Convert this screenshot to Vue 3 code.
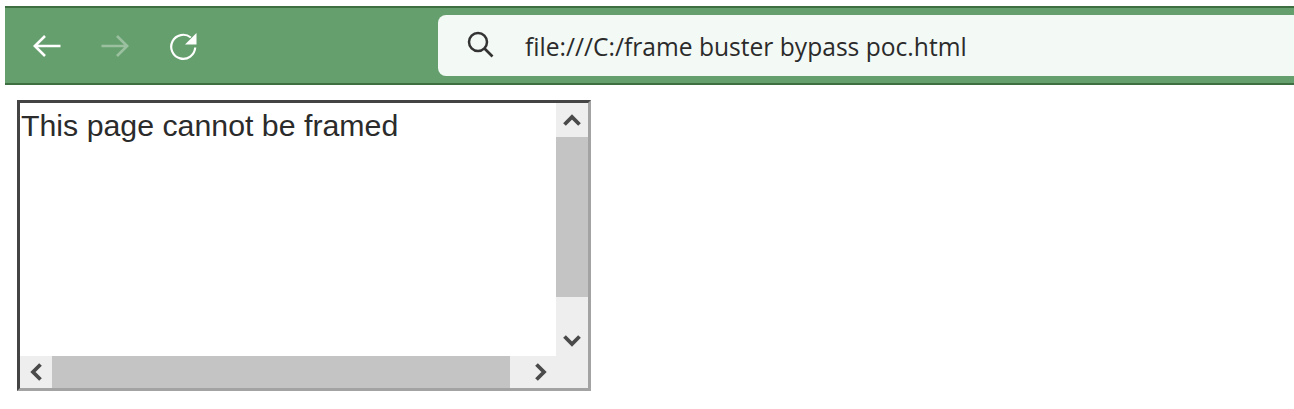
<script setup>
const url = "file:///C:/frame buster bypass poc.html";
const message = "This page cannot be framed";
</script>

<template>
  <div class="page">
    <header class="toolbar">
      <nav class="nav-buttons">
        <svg class="nav-icon" viewBox="0 0 28 26" width="28" height="26">
          <path d="M12 3 1.8 13 12 23M2 13h25.5" fill="none" stroke="#fff" stroke-width="2.6" />
        </svg>
        <svg class="nav-icon faded" viewBox="0 0 28 26" width="28" height="26">
          <path d="M16 3 26.2 13 16 23M26 13H.5" fill="none" stroke="#fff" stroke-width="2.6" />
        </svg>
        <svg class="nav-icon" viewBox="0 0 28 28" width="28" height="28">
          <path d="M21.8 5.5A12 12 0 1 0 26.2 15.5" fill="none" stroke="#fff" stroke-width="2.2" />
          <path d="M27.5 1v11.5H16z" fill="#fff" />
        </svg>
      </nav>
      <div class="address">
        <svg class="search-icon" viewBox="0 0 27 27" width="27" height="27">
          <circle cx="11" cy="11" r="9" fill="none" stroke="#333" stroke-width="2.5" />
          <path d="m17.5 17.5 8 8" stroke="#333" stroke-width="2.7" fill="none" />
        </svg>
        <span class="url">{{ url }}</span>
      </div>
    </header>

    <div class="frame">
      <div class="content">{{ message }}</div>
      <div class="vbar">
        <div class="arrow-btn up">
          <svg viewBox="0 0 18 12" width="18" height="12"><path d="M1.5 10.5 9 3l7.5 7.5" fill="none" stroke="#4a4a4a" stroke-width="3.8" /></svg>
        </div>
        <div class="vthumb"></div>
        <div class="track"></div>
        <div class="arrow-btn down">
          <svg viewBox="0 0 18 12" width="18" height="12"><path d="M1.5 1.5 9 9l7.5-7.5" fill="none" stroke="#4a4a4a" stroke-width="3.8" /></svg>
        </div>
      </div>
      <div class="hbar">
        <div class="arrow-btn left">
          <svg viewBox="0 0 12 18" width="12" height="18"><path d="M10.5 1.5 3 9l7.5 7.5" fill="none" stroke="#4a4a4a" stroke-width="3.8" /></svg>
        </div>
        <div class="hthumb"></div>
        <div class="arrow-btn right">
          <svg viewBox="0 0 12 18" width="12" height="18"><path d="M1.5 1.5 9 9l-7.5 7.5" fill="none" stroke="#4a4a4a" stroke-width="3.8" /></svg>
        </div>
      </div>
      <div class="corner"></div>
    </div>
  </div>
</template>

<style>
html, body {
  margin: 0;
  background: #fff;
}
</style>

<style scoped>
.page {
  width: 1294px;
  height: 409px;
  padding-top: 6px;
  box-sizing: border-box;
  overflow: hidden;
}
.toolbar {
  box-sizing: border-box;
  height: 79px;
  margin-left: 5px;
  display: flex;
  align-items: center;
  background: #659f6d;
  border-top: 2px solid #3d6f40;
  border-bottom: 2px solid #3d6f40;
}
.nav-buttons {
  display: flex;
  align-items: center;
  gap: 40px;
  width: 433px;
  padding-left: 28px;
  box-sizing: border-box;
}
.faded {
  opacity: 0.35;
}
.address {
  flex: 1;
  height: 61px;
  display: flex;
  align-items: center;
  background: #f3f9f5;
  border-radius: 8px 0 0 8px;
}
.search-icon {
  margin-left: 29px;
  margin-top: -3px;
}
.url {
  margin: 2px 0 0 31px;
  font-family: "Open Sans", "Noto Sans", sans-serif;
  font-size: 24.6px;
  color: #2b2b2b;
  white-space: nowrap;
}
.frame {
  box-sizing: border-box;
  width: 574px;
  height: 291px;
  margin: 15px 0 0 17px;
  display: grid;
  grid-template-columns: 1fr 32px;
  grid-template-rows: 1fr 32px;
  border: 3px solid #a3a3a3;
  border-top-color: #444;
  border-left-color: #444;
}
.content {
  padding: 4px 0 0 1px;
  font-family: "Liberation Sans", Arial, sans-serif;
  font-size: 30.3px;
  line-height: 38px;
  color: #2b2b2b;
  white-space: nowrap;
  overflow: hidden;
}
.vbar {
  display: flex;
  flex-direction: column;
  background: #eee;
}
.arrow-btn {
  display: flex;
  align-items: center;
  justify-content: center;
  background: #eee;
}
.arrow-btn.up {
  height: 34px;
}
.arrow-btn.down {
  box-sizing: border-box;
  height: 35px;
  padding-top: 4px;
}
.vthumb {
  height: 160px;
  background: #c4c4c4;
}
.track {
  flex: 1;
}
.hbar {
  display: flex;
  background: #c4c4c4;
}
.arrow-btn.left {
  width: 32px;
}
.arrow-btn.right {
  box-sizing: border-box;
  width: 46px;
  padding-left: 16px;
}
.hthumb {
  flex: 1;
}
.corner {
  background: #eee;
}
</style>
